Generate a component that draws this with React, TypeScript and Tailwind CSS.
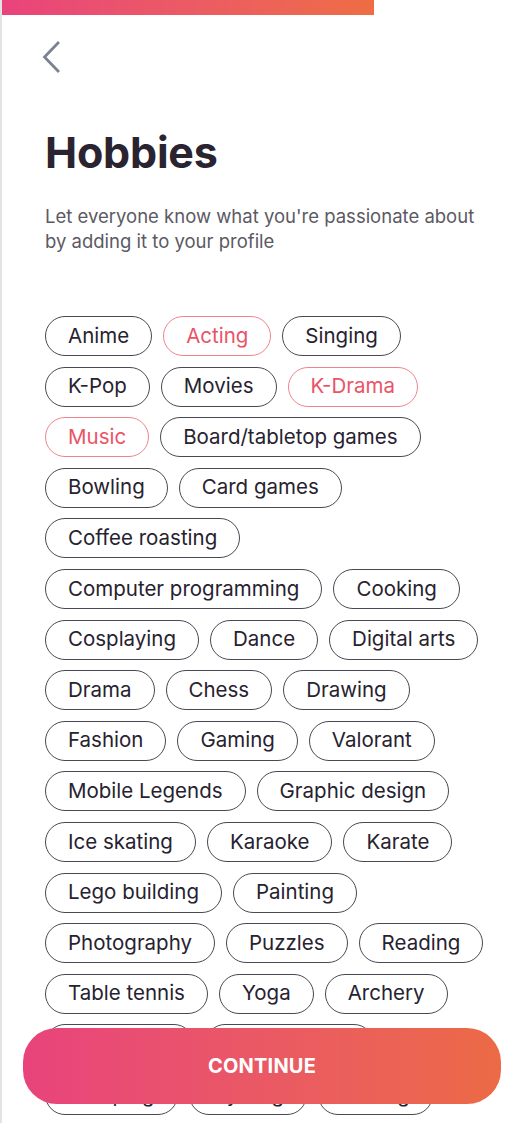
import { useState } from "react";

const hobbies = [
  "Anime",
  "Acting",
  "Singing",
  "K-Pop",
  "Movies",
  "K-Drama",
  "Music",
  "Board/tabletop games",
  "Bowling",
  "Card games",
  "Coffee roasting",
  "Computer programming",
  "Cooking",
  "Cosplaying",
  "Dance",
  "Digital arts",
  "Drama",
  "Chess",
  "Drawing",
  "Fashion",
  "Gaming",
  "Valorant",
  "Mobile Legends",
  "Graphic design",
  "Ice skating",
  "Karaoke",
  "Karate",
  "Lego building",
  "Painting",
  "Photography",
  "Puzzles",
  "Reading",
  "Table tennis",
  "Yoga",
  "Archery",
  "Badminton",
  "Volunteering",
  "Camping",
  "Cycling",
  "Writing",
];

export default function App() {
  const [selected, setSelected] = useState<string[]>(["Acting", "K-Drama", "Music"]);

  const toggle = (name: string) =>
    setSelected((current) =>
      current.includes(name) ? current.filter((item) => item !== name) : [...current, name],
    );

  return (
    <div className="relative min-h-screen bg-white border-l-2 border-[#e3e3e3] font-['Inter',sans-serif]">
      <div className="h-[15px] w-[372px] bg-gradient-to-r from-[#e9437c] to-[#ee6d43]" />

      <div className="pl-[43px] pr-[32px]">
        <button type="button" aria-label="Back" className="-ml-[6px] mt-[25px] flex h-[34px] w-[26px] items-center justify-center">
          <svg width="22" height="34" viewBox="0 0 22 34" fill="none">
            <path d="M17 3 L3.5 17 L17 31" stroke="#7b8290" strokeWidth="2.8" strokeLinecap="square" strokeLinejoin="miter" />
          </svg>
        </button>

        <h1 className="mt-[52px] text-[43px] font-bold leading-[52px] tracking-[-0.2px] text-[#2a2430]">Hobbies</h1>

        <p className="mt-[26px] max-w-[440px] text-[18.5px] leading-[25px] text-[#5b5963]">
          Let everyone know what you're passionate about by adding it to your profile
        </p>

        <div className="mt-[62px] flex flex-wrap gap-x-[11px] gap-y-[10.6px] pb-[140px]">
          {hobbies.map((name) => {
            const active = selected.includes(name);
            return (
              <button
                key={name}
                type="button"
                onClick={() => toggle(name)}
                className={
                  active
                    ? "h-[40px] rounded-full border border-[#f0848d] px-[22px] text-[20.5px] text-[#ea5366]"
                    : "h-[40px] rounded-full border border-[#4a4853] px-[22px] text-[20.5px] text-[#27222f]"
                }
              >
                {name}
              </button>
            );
          })}
        </div>
      </div>

      <div className="fixed bottom-[19px] left-[23px] right-[21px]">
        <button
          type="button"
          className="flex h-[76px] w-full items-center justify-center rounded-[34px] bg-gradient-to-r from-[#e8437c] to-[#ec6a45] text-[20px] font-bold tracking-[0.2px] text-white"
        >
          CONTINUE
        </button>
      </div>
    </div>
  );
}
